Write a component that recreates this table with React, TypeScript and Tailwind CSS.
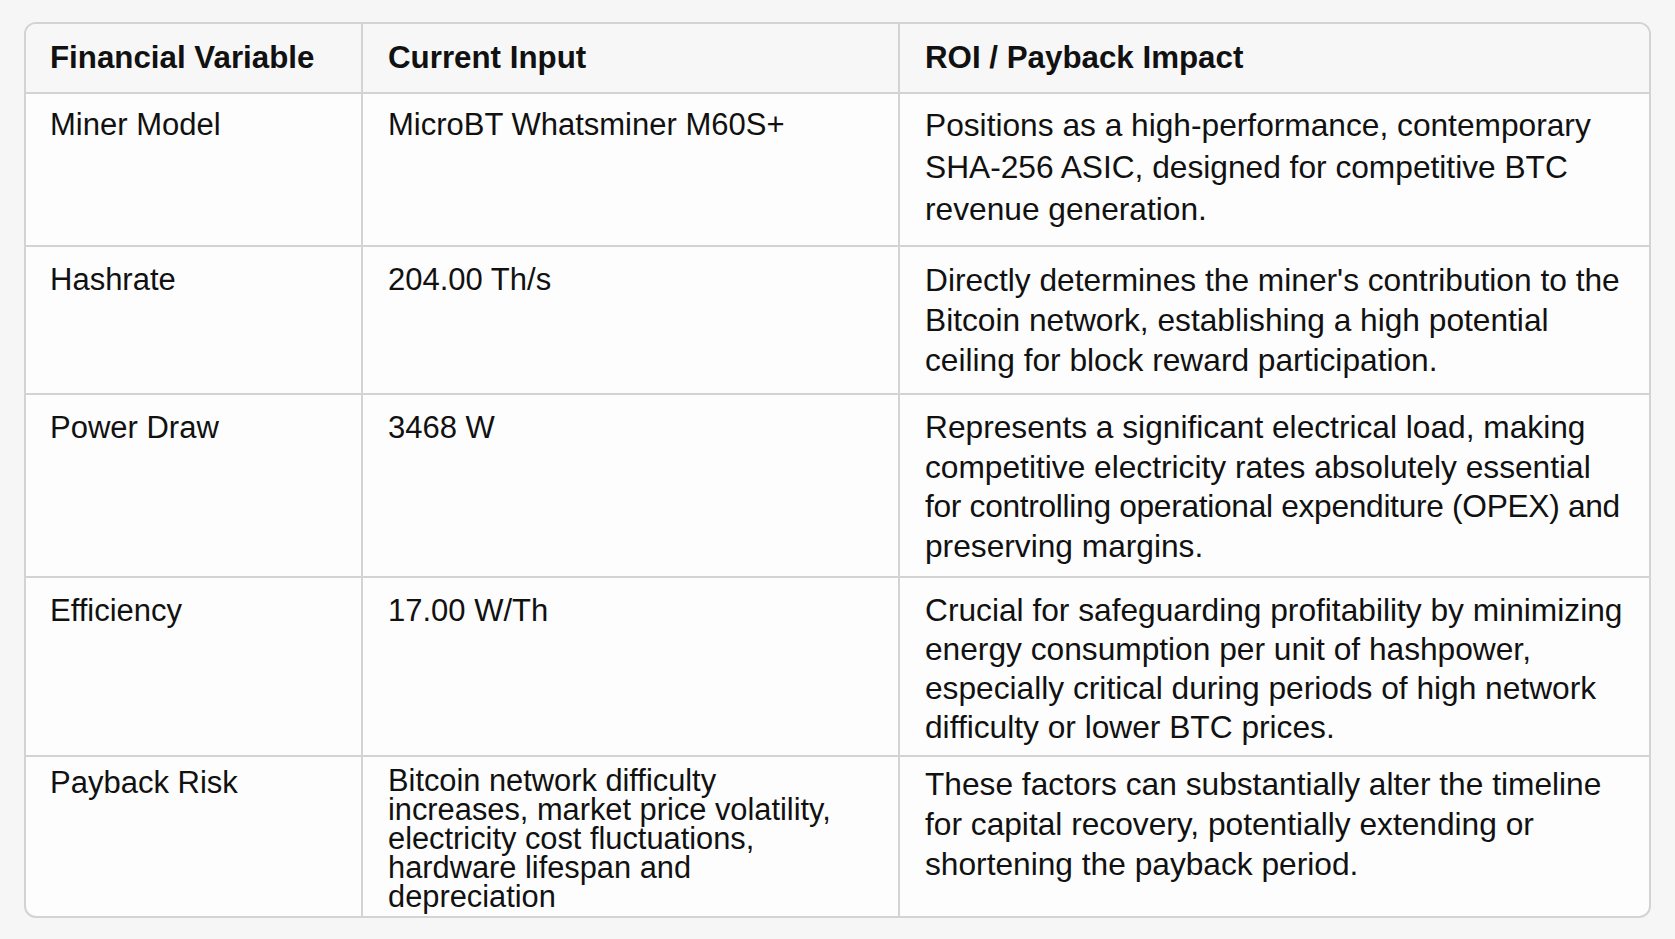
const rows = [
  {
    name: "Miner Model",
    input: "MicroBT Whatsminer M60S+",
    impact: [
      "Positions as a high-performance, contemporary",
      "SHA-256 ASIC, designed for competitive BTC",
      "revenue generation.",
    ],
    h: "h-[153px]",
    pt: "pt-[10px]",
    lh: "leading-[42px]",
  },
  {
    name: "Hashrate",
    input: "204.00 Th/s",
    impact: [
      "Directly determines the miner's contribution to the",
      "Bitcoin network, establishing a high potential",
      "ceiling for block reward participation.",
    ],
    h: "h-[148px]",
    pt: "pt-[13px]",
    lh: "leading-[40px]",
  },
  {
    name: "Power Draw",
    input: "3468 W",
    impact: [
      "Represents a significant electrical load, making",
      "competitive electricity rates absolutely essential",
      "for controlling operational expenditure (OPEX) and",
      "preserving margins.",
    ],
    h: "h-[183px]",
    pt: "pt-[13px]",
    lh: "leading-[39.5px]",
  },
  {
    name: "Efficiency",
    input: "17.00 W/Th",
    impact: [
      "Crucial for safeguarding profitability by minimizing",
      "energy consumption per unit of hashpower,",
      "especially critical during periods of high network",
      "difficulty or lower BTC prices.",
    ],
    h: "h-[179px]",
    pt: "pt-[13px]",
    lh: "leading-[39px]",
  },
];

const riskInput = [
  "Bitcoin network difficulty",
  "increases, market price volatility,",
  "electricity cost fluctuations,",
  "hardware lifespan and",
  "depreciation",
];

const riskImpact = [
  "These factors can substantially alter the timeline",
  "for capital recovery, potentially extending or",
  "shortening the payback period.",
];

const App = () => {
  return (
    <div className="min-h-screen w-full bg-[#f6f6f6] pt-[22px] pl-[24px] font-['Liberation_Sans',Arial,sans-serif] text-[#111111]">
      <div className="w-[1627px] overflow-hidden rounded-[12px] border-2 border-[#d3d3d3] bg-[#fdfdfd]">
        {/* header */}
        <div className="flex h-[70px] border-b-2 border-[#d3d3d3] bg-[#f7f7f7] text-[31.3px] leading-[40px] font-bold">
          <div className="w-[337px] shrink-0 border-r-2 border-[#d3d3d3] pl-[24px] pt-[14px]">
            Financial Variable
          </div>
          <div className="w-[537px] shrink-0 border-r-2 border-[#d3d3d3] pl-[25px] pt-[14px]">
            Current Input
          </div>
          <div className="flex-1 pl-[25px] pt-[14px]">ROI / Payback Impact</div>
        </div>

        {rows.map((row) => (
          <div
            key={row.name}
            className={`flex ${row.h} border-b-2 border-[#d3d3d3] text-[31px] ${row.lh}`}
          >
            <div className={`w-[337px] shrink-0 border-r-2 border-[#d3d3d3] pl-[24px] ${row.pt}`}>
              {row.name}
            </div>
            <div className={`w-[537px] shrink-0 border-r-2 border-[#d3d3d3] pl-[25px] pr-[20px] ${row.pt}`}>
              {row.input}
            </div>
            <div className={`flex-1 pl-[25px] text-[31.7px] whitespace-nowrap ${row.pt}`}>
              {row.impact.map((line) => (
                <div key={line} className={line.includes("(OPEX)") ? "tracking-[-0.3px]" : ""}>
                  {line}
                </div>
              ))}
            </div>
          </div>
        ))}

        {/* last row */}
        <div className="flex h-[159px] text-[31px] leading-[40px]">
          <div className="w-[337px] shrink-0 border-r-2 border-[#d3d3d3] pl-[24px] pt-[6px]">
            Payback Risk
          </div>
          <div className="w-[537px] shrink-0 border-r-2 border-[#d3d3d3] pl-[25px] pt-[9px] text-[30.8px] leading-[29px] whitespace-nowrap">
            {riskInput.map((line) => (
              <div key={line}>{line}</div>
            ))}
          </div>
          <div className="flex-1 pl-[25px] pt-[7px] text-[31.7px] whitespace-nowrap">
            {riskImpact.map((line) => (
              <div key={line}>{line}</div>
            ))}
          </div>
        </div>
      </div>
    </div>
  );
};

export default App;
